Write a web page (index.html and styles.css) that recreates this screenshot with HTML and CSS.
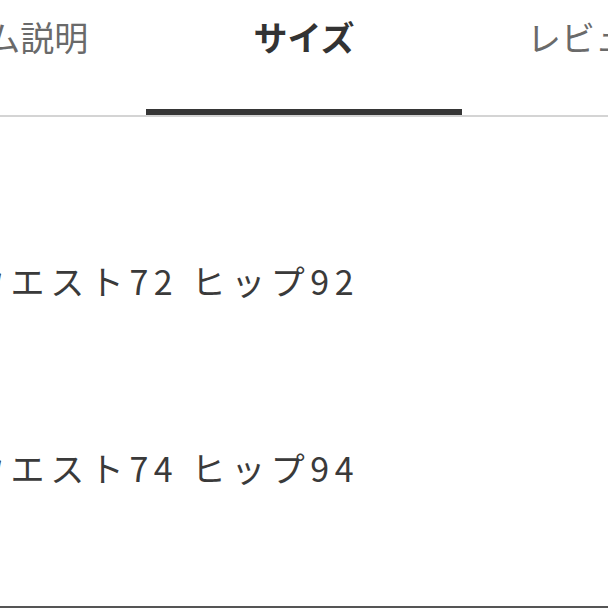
FILE: index.html
```html
<!DOCTYPE html>
<html lang="ja">
<head>
<meta charset="utf-8">
<link rel="stylesheet" href="styles.css">
</head>
<body>
<div class="page">
  <div class="tabs">
    <div class="tab">アイテム説明</div>
    <div class="tab tab-active">サイズ<span class="tab-bar"></span></div>
    <div class="tab tab-right">レビュー</div>
  </div>
  <div class="sizes">
    <div class="size-row">ウエスト72 ヒップ92</div>
    <div class="size-row">ウエスト74 ヒップ94</div>
  </div>
  <div class="bottom-line"></div>
</div>
</body>
</html>
```
FILE: styles.css
```css
html, body {
  margin: 0;
  padding: 0;
  background: #ffffff;
  overflow: hidden;
}
body {
  font-family: "Noto Sans CJK JP", "Noto Sans", sans-serif;
  color: #333333;
}
.page {
  width: 948px;
  margin-left: -170px;
}
.tabs {
  display: flex;
  height: 115px;
  border-bottom: 2px solid #d4d4d4;
}
.tab {
  flex: none;
  width: 316px;
  position: relative;
  box-sizing: border-box;
  padding-top: 20px;
  font-size: 34px;
  line-height: 34px;
  text-align: center;
  color: #6a6a6a;
  white-space: nowrap;
}
.tab-active {
  color: #333333;
  font-weight: bold;
}
.tab-right {
  text-align: left;
  padding-left: 65px;
}
.tab-bar {
  position: absolute;
  left: 0;
  right: 0;
  bottom: 0;
  height: 6px;
  background: #363636;
}
.sizes {
  display: flex;
  flex-direction: column;
  gap: 153px;
  padding-top: 147px;
  padding-left: 141px;
}
.size-row {
  font-size: 34px;
  line-height: 34px;
  letter-spacing: 5.6px;
  color: #3a3a3a;
  white-space: nowrap;
}
.bottom-line {
  margin-top: 121px;
  border-top: 2px solid #555555;
}
```
